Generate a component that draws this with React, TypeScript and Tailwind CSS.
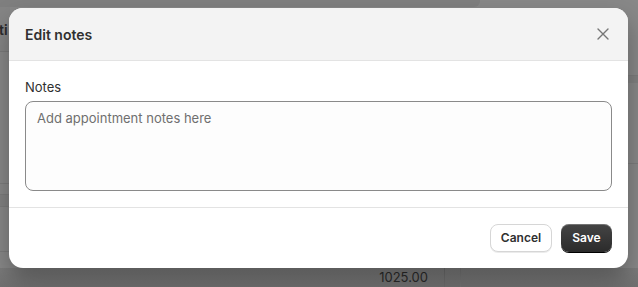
export default function App() {
  return (
    <div
      className="relative h-[287px] w-[638px] overflow-hidden bg-[#888888]"
      style={{ fontFamily: "Inter, 'Noto Sans', sans-serif" }}
    >
      {/* Dimmed page behind the modal */}
      <div className="flex h-full flex-col">
        <div className="flex h-[7px]">
          <div className="w-[480px] rounded-br-[6px] bg-[#7f7f7f]" />
          <div className="flex-1" />
        </div>
        <div className="flex flex-1">
          <div className="flex w-[10px] flex-col">
            <div className="flex h-[45px] items-center border-b border-[#7a7a7a] bg-[#858585] text-[14px] font-semibold text-[#2a2a2a]">
              <span className="-ml-[1px]">ti</span>
            </div>
            <div className="h-[131px]" />
            <div className="h-[11px] border-t border-[#7c7c7c]" />
            <div className="h-[12px] border-t border-[#7c7c7c] bg-[#828282]" />
            <div className="h-[45px] border-t border-[#7c7c7c]" />
            <div className="flex-1 border-t border-[#7c7c7c]" />
          </div>
          <div className="flex-1" />
          <div className="flex w-[12px] flex-col">
            <div className="h-[68px]" />
            <div className="h-[8px] border-t border-[#7c7c7c] bg-[#808080]" />
            <div className="h-[80px]" />
            <div className="flex-1 border-t border-[#7c7c7c]" />
          </div>
        </div>
        <div className="flex h-[19px] items-center bg-gradient-to-b from-[#7c7c7c] to-[#707070]">
          <div className="w-[428px] text-right text-[13px] text-[#2a2a2a]">1025.00</div>
          <div className="ml-[16px] h-full w-px bg-[#6c6c6c]" />
          <div className="ml-[15px] h-full w-px bg-[#747474]" />
        </div>
      </div>

      {/* Modal */}
      <div className="absolute left-[9px] top-[8px] flex h-[260px] w-[619px] flex-col overflow-hidden rounded-[14px] bg-white shadow-[0_12px_24px_rgba(0,0,0,0.3)]">
        <div className="flex h-[53px] shrink-0 items-center justify-between border-b border-[#e3e3e3] bg-[#f3f3f3] pl-[16px] pr-[19px]">
          <span className="text-[14px] font-semibold text-[#303030]">Edit notes</span>
          <svg width="12" height="12" viewBox="0 0 12 12" fill="none" stroke="#767676" strokeWidth="1.4" strokeLinecap="round">
            <path d="M1 1l10 10M11 1L1 11" />
          </svg>
        </div>
        <div className="flex shrink-0 flex-col gap-[4px] border-b border-[#e3e3e3] px-[16px] pb-[16px] pt-[16px]">
          <label className="text-[13px] leading-[20px] text-[#303030]">Notes</label>
          <textarea
            className="h-[90px] resize-none rounded-[8px] border border-[#8a8a8a] bg-[#fdfdfd] px-[11px] py-[6px] text-[13px] leading-[20px] text-[#303030] outline-none placeholder:text-[#6f6f6f]"
            placeholder="Add appointment notes here"
          />
        </div>
        <div className="flex flex-1 items-start justify-end gap-[9px] px-[16px] pt-[16px]">
          <button className="h-[28px] w-[62px] shrink-0 rounded-[8px] border border-[#d6d6d6] bg-white text-[12px] font-semibold text-[#303030] shadow-[0_1px_0_rgba(0,0,0,0.08)]">
            Cancel
          </button>
          <button className="h-[28px] w-[51px] shrink-0 rounded-[8px] bg-gradient-to-b from-[#454545] to-[#2b2b2b] text-[12px] font-semibold text-white shadow-[0_1px_0_#000,inset_0_1px_0_rgba(255,255,255,0.25)]">
            Save
          </button>
        </div>
      </div>
    </div>
  );
}
